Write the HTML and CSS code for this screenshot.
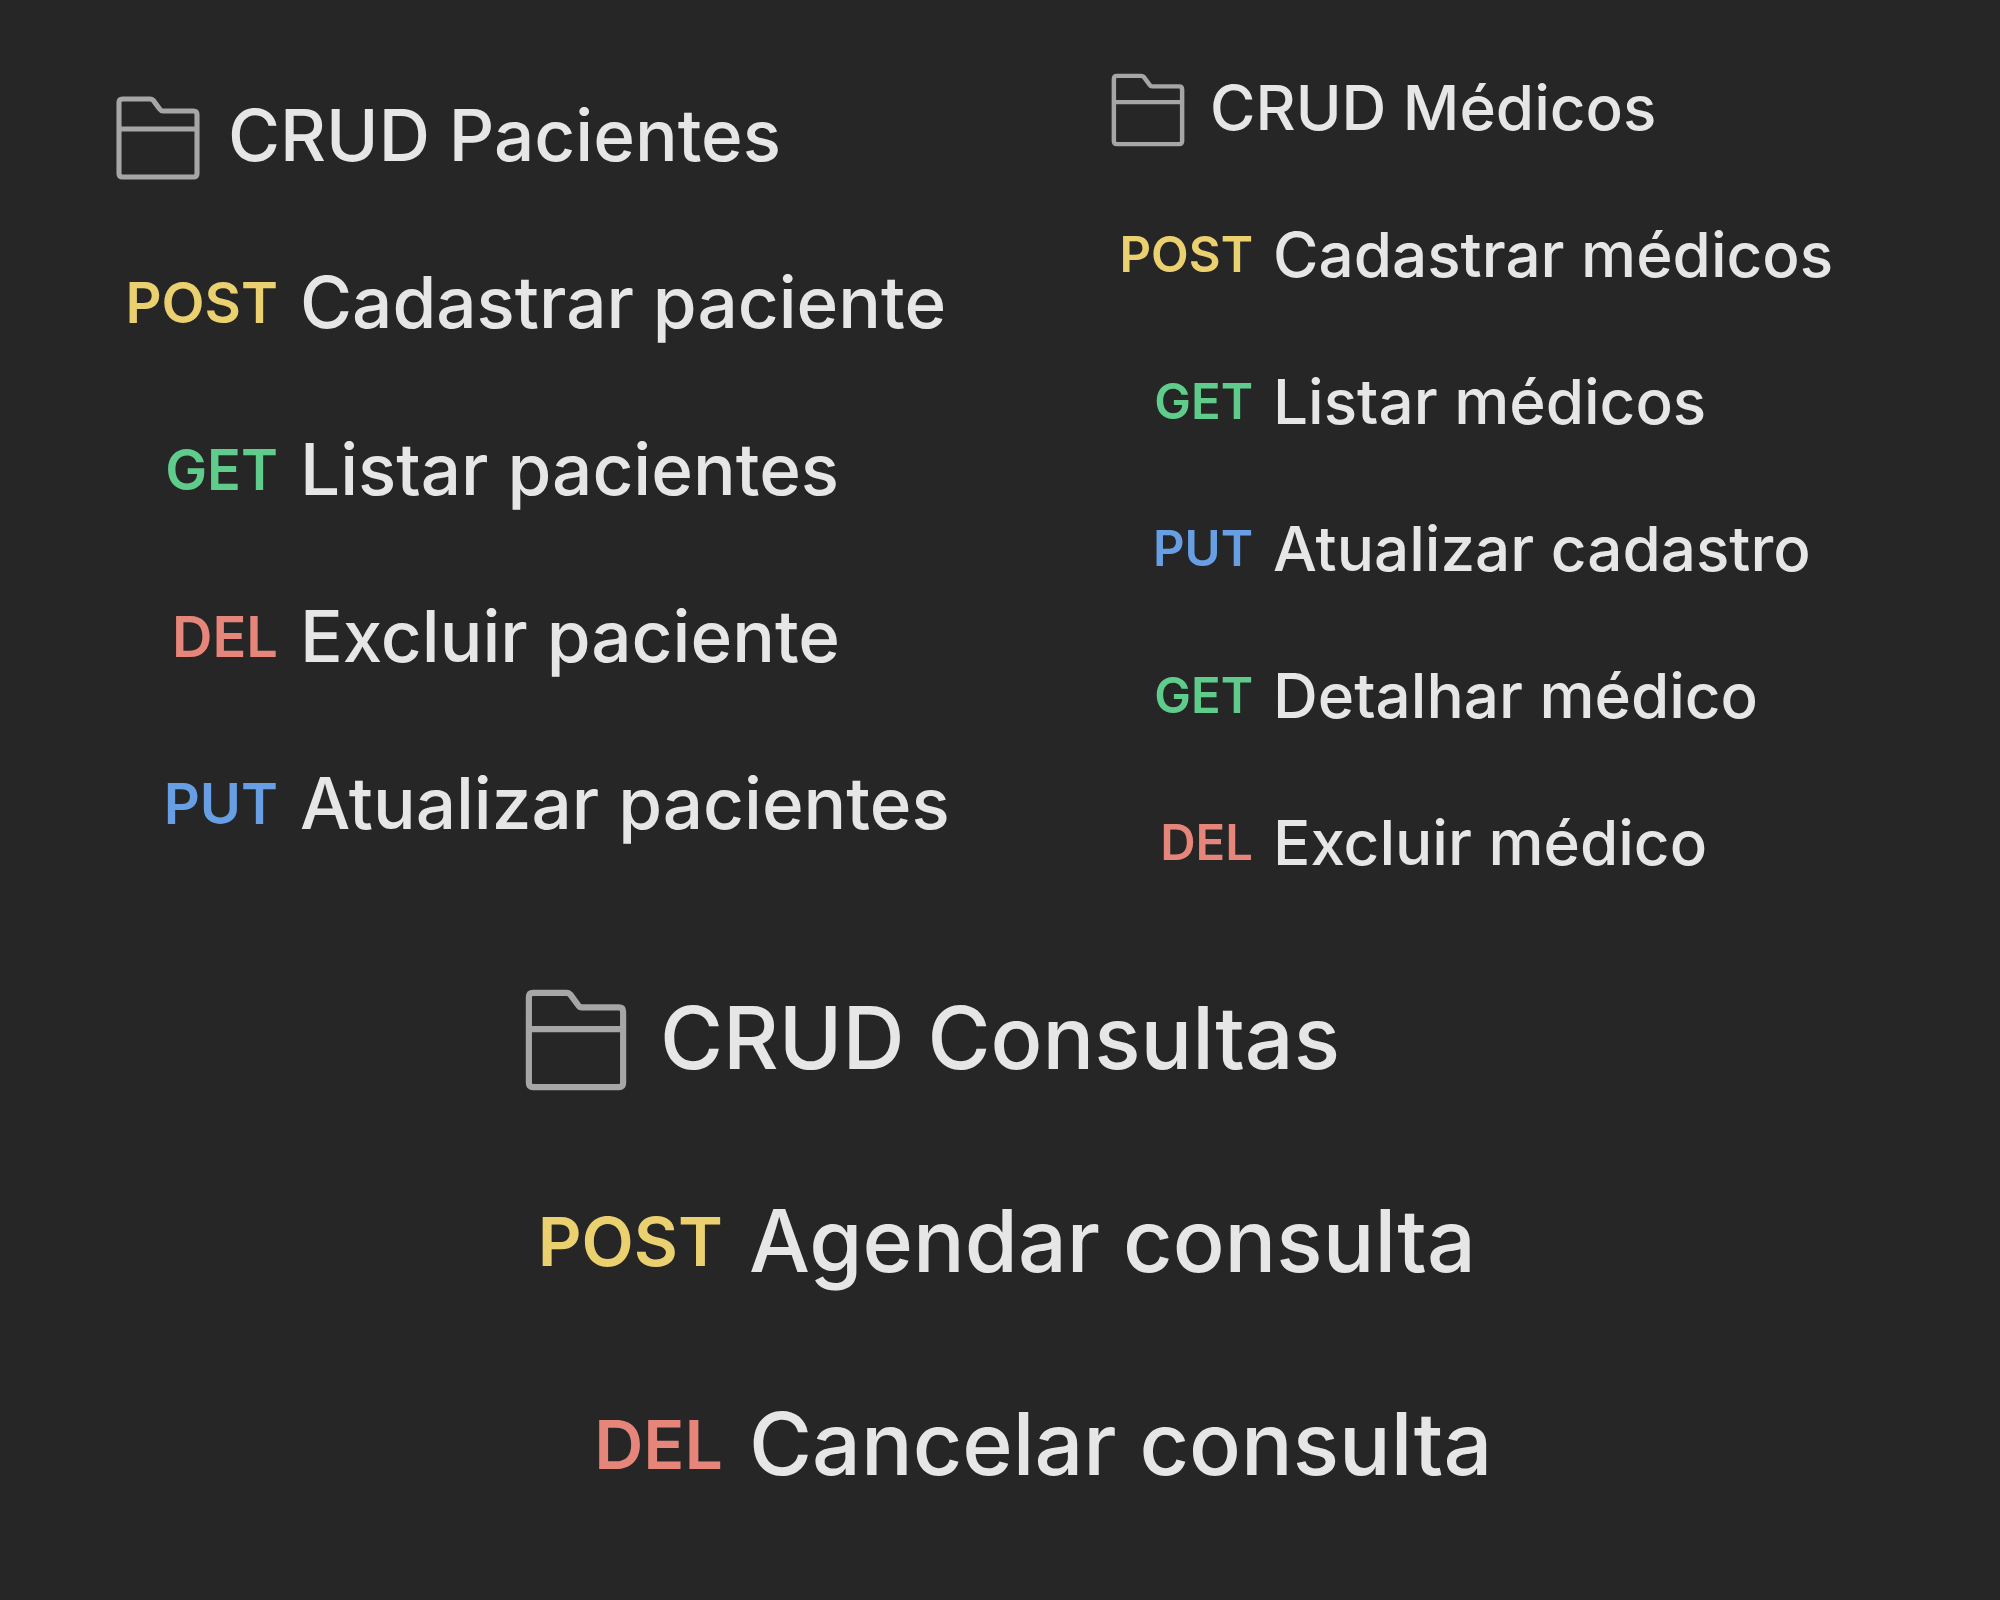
FILE: index.html
```html
<!DOCTYPE html>
<html lang="pt-BR">
<head>
<meta charset="utf-8">
<meta name="viewport" content="width=device-width, initial-scale=1">
<title>CRUD</title>
<link rel="stylesheet" href="styles.css">
</head>
<body>
<svg class="sprite" aria-hidden="true">
  <symbol id="folder" viewBox="0 0 16 16">
    <path d="M2.1 1.5H6.7Q7 1.5 7.2 1.7L8.3 3.2Q8.5 3.5 8.8 3.5H13.9Q14.5 3.5 14.5 4.1V13.9Q14.5 14.5 13.9 14.5H2.1Q1.5 14.5 1.5 13.9V2.1Q1.5 1.5 2.1 1.5ZM1.5 6.5H14.5" fill="none" stroke="currentColor" stroke-width="0.85"/>
  </symbol>
</svg>
<main class="board">
  <section class="folder folder-patients">
    <h2 class="folder-title"><svg class="folder-icon" aria-hidden="true"><use href="#folder"/></svg><span class="name">CRUD Pacientes</span></h2>
    <ul class="requests">
      <li><a class="request" href="#"><span class="method post">POST</span><span class="name">Cadastrar paciente</span></a></li>
      <li><a class="request" href="#"><span class="method get">GET</span><span class="name">Listar pacientes</span></a></li>
      <li><a class="request" href="#"><span class="method del">DEL</span><span class="name">Excluir paciente</span></a></li>
      <li><a class="request" href="#"><span class="method put">PUT</span><span class="name">Atualizar pacientes</span></a></li>
    </ul>
  </section>
  <section class="folder folder-doctors">
    <h2 class="folder-title"><svg class="folder-icon" aria-hidden="true"><use href="#folder"/></svg><span class="name">CRUD Médicos</span></h2>
    <ul class="requests">
      <li><a class="request" href="#"><span class="method post">POST</span><span class="name">Cadastrar médicos</span></a></li>
      <li><a class="request" href="#"><span class="method get">GET</span><span class="name">Listar médicos</span></a></li>
      <li><a class="request" href="#"><span class="method put">PUT</span><span class="name">Atualizar cadastro</span></a></li>
      <li><a class="request" href="#"><span class="method get">GET</span><span class="name">Detalhar médico</span></a></li>
      <li><a class="request" href="#"><span class="method del">DEL</span><span class="name">Excluir médico</span></a></li>
    </ul>
  </section>
  <section class="folder folder-visits">
    <h2 class="folder-title"><svg class="folder-icon" aria-hidden="true"><use href="#folder"/></svg><span class="name">CRUD Consultas</span></h2>
    <ul class="requests">
      <li><a class="request" href="#"><span class="method post">POST</span><span class="name">Agendar consulta</span></a></li>
      <li><a class="request" href="#"><span class="method del">DEL</span><span class="name">Cancelar consulta</span></a></li>
    </ul>
  </section>
</main>
</body>
</html>
```
FILE: styles.css
```css
* {
  box-sizing: border-box;
}

body {
  margin: 0;
  min-height: 100vh;
  background: #262626;
  color: #e6e6e6;
  font-family: Inter, "Liberation Sans", sans-serif;
}

.sprite {
  display: none;
}

.board {
  display: grid;
  grid-template-columns: 11fr 9fr;
  row-gap: 20px;
  padding-top: 36px;
}

.folder {
  font-size: var(--text);
  font-weight: 500;
  line-height: 1;
  white-space: nowrap;
}

.folder-patients {
  --text: 71px;
  --label: 56px;
  --row: 167px;
  --icon: 96px;
  --label-width: 168px;
  --gap: 22px;
  padding: 18px 0 0 110px;
}

.folder-doctors {
  --text: 62px;
  --label: 49px;
  --row: 147px;
  --icon: 84px;
  --label-width: 147px;
  --gap: 20px;
  padding-left: 6px;
}

.folder-visits {
  --text: 86px;
  --label: 68px;
  --row: 203px;
  --icon: 116px;
  --label-width: 205px;
  --gap: 26px;
  grid-column: 1 / -1;
  padding-left: 518px;
}

.folder-title {
  display: flex;
  align-items: center;
  gap: var(--gap);
  height: var(--row);
  margin: 0;
  font-size: inherit;
  font-weight: inherit;
}

.folder-icon {
  flex: none;
  width: var(--icon);
  height: var(--icon);
  color: #a6a6a6;
}

.name {
  padding-bottom: 4px;
}

.requests {
  margin: 0;
  padding: 0;
  list-style: none;
}

.request {
  display: grid;
  grid-template-columns: var(--label-width) auto;
  justify-content: start;
  align-items: center;
  column-gap: var(--gap);
  height: var(--row);
  color: inherit;
  text-decoration: none;
}

.method {
  padding-bottom: 4px;
  font-size: var(--label);
  font-weight: 600;
  text-align: right;
}

.post {
  color: #ebd070;
}

.get {
  color: #60cc8c;
}

.put {
  color: #689fe4;
}

.del {
  color: #e6857a;
}
```
